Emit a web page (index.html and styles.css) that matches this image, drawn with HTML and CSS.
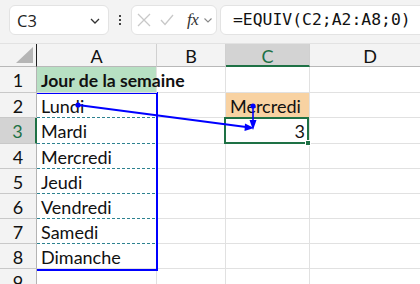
FILE: index.html
```html
<!DOCTYPE html>
<html>
<head>
<meta charset="utf-8">
<link rel="stylesheet" href="styles.css">
</head>
<body>
<div class="toolbar">
  <div class="namebox"><span class="ref">C3</span>
    <svg class="chev" width="10" height="6" viewBox="0 0 10 6"><path d="M1 1 L5 5 L9 1" fill="none" stroke="#333" stroke-width="1.3"/></svg>
  </div>
  <div class="vdots"><i></i><i></i><i></i></div>
  <div class="fxbox">
    <svg width="14" height="14" viewBox="0 0 14 14"><path d="M1 1 L13 13 M13 1 L1 13" stroke="#c8c8c8" stroke-width="1.3"/></svg>
    <svg width="14" height="12" viewBox="0 0 14 12"><path d="M1 6 L5 10.5 L13 1" fill="none" stroke="#c8c8c8" stroke-width="1.3"/></svg>
    <span class="fx">fx</span>
    <svg width="8" height="5" viewBox="0 0 8 5"><path d="M0.5 0.5 L4 4 L7.5 0.5" fill="none" stroke="#888" stroke-width="1.1"/></svg>
  </div>
  <div class="formula">=EQUIV(C2;A2:A8;0)</div>
</div>
<div class="sheet">
  <div class="grid">
    <div class="corner"><span class="tri"></span></div>
    <div class="ch">A</div>
    <div class="ch">B</div>
    <div class="ch sel">C</div>
    <div class="ch last">D</div>

    <div class="rh">1</div>
    <div class="c a1">Jour de la semaine</div>
    <div class="c"></div>
    <div class="c"></div>
    <div class="c last"></div>

    <div class="rh">2</div>
    <div class="c dl">Lundi</div>
    <div class="c"></div>
    <div class="c c2">Mercredi</div>
    <div class="c last"></div>

    <div class="rh sel">3</div>
    <div class="c dl">Mardi</div>
    <div class="c"></div>
    <div class="c num">3</div>
    <div class="c last"></div>

    <div class="rh">4</div>
    <div class="c dl">Mercredi</div>
    <div class="c"></div>
    <div class="c"></div>
    <div class="c last"></div>

    <div class="rh">5</div>
    <div class="c dl">Jeudi</div>
    <div class="c"></div>
    <div class="c"></div>
    <div class="c last"></div>

    <div class="rh">6</div>
    <div class="c dl">Vendredi</div>
    <div class="c"></div>
    <div class="c"></div>
    <div class="c last"></div>

    <div class="rh">7</div>
    <div class="c dl">Samedi</div>
    <div class="c"></div>
    <div class="c"></div>
    <div class="c last"></div>

    <div class="rh">8</div>
    <div class="c">Dimanche</div>
    <div class="c"></div>
    <div class="c"></div>
    <div class="c last"></div>

    <div class="rh">9</div>
    <div class="c"></div>
    <div class="c"></div>
    <div class="c"></div>
    <div class="c last"></div>
  </div>
  <div class="range"></div>
  <div class="active"><span class="handle"></span></div>
  <svg class="arrows" width="420" height="241" viewBox="0 0 420 241">
    <g fill="#0000ff" stroke="#0000ff">
      <circle cx="78" cy="61" r="2.6" stroke="none"/>
      <line x1="78" y1="61" x2="246" y2="83" stroke-width="2"/>
      <path d="M254 84 L245 79.5 L244.5 87 Z" stroke="none"/>
      <circle cx="253" cy="62" r="2.6" stroke="none"/>
      <line x1="253" y1="62" x2="253" y2="77" stroke-width="1.6"/>
      <path d="M253 86 L249.5 76 L256.5 76 Z" stroke="none"/>
    </g>
  </svg>
</div>
</body>
</html>
```
FILE: styles.css
```css
* { box-sizing: border-box; }
html, body { margin: 0; padding: 0; }
body {
  width: 420px;
  height: 284px;
  overflow: hidden;
  background: #ffffff;
  font-family: "Lato", "Liberation Sans", sans-serif;
}
.toolbar {
  height: 43px;
  background: #f3f3f3;
  display: flex;
  align-items: flex-start;
  padding: 5px 0 0 9px;
}
.namebox {
  width: 100px;
  height: 30px;
  background: #fff;
  border: 1px solid #e3e3e3;
  border-radius: 6px;
  display: flex;
  align-items: center;
  justify-content: space-between;
  padding: 0 8px 0 7px;
}
.ref {
  font-family: "Open Sans", "Liberation Sans", sans-serif;
  font-size: 16.5px;
  color: #222;
}
.chev { margin-top: 2px; }
.vdots {
  width: 22px;
  height: 30px;
  display: flex;
  flex-direction: column;
  align-items: center;
  justify-content: center;
  gap: 2px;
}
.vdots i {
  display: block;
  width: 2px;
  height: 2px;
  background: #444;
}
.fxbox {
  width: 86px;
  height: 30px;
  background: #fff;
  border: 1px solid #e3e3e3;
  border-radius: 6px;
  display: flex;
  align-items: center;
  padding: 0 0 0 5px;
  gap: 9px;
}
.fx {
  font-family: "Liberation Serif", "DejaVu Serif", serif;
  font-style: italic;
  font-size: 17px;
  color: #333;
  margin-left: 4px;
  margin-right: -3px;
  letter-spacing: -0.5px;
}
.formula {
  margin-left: 3px;
  flex: 1;
  margin-right: -6px;
  height: 30px;
  background: #fff;
  border: 1px solid #e3e3e3;
  border-radius: 6px;
  padding: 3px 0 0 12px;
  font-family: "DejaVu Sans Mono", "Liberation Mono", monospace;
  font-size: 16.4px;
  color: #111;
  line-height: 22px;
}
.sheet {
  position: relative;
  height: 241px;
  border-top: 1px solid #e2e2e2;
}
.grid {
  display: grid;
  grid-template-columns: 37px 120px 69px 84px 120px;
  grid-template-rows: 23px 26px 25px 26px 25px 25px 25px 25px 25px 25px;
}
.corner {
  position: relative;
  background: #f3f3f3;
  border-right: 1px solid #1f1f1f;
  border-bottom: 1px solid #b8b8b8;
}
.tri {
  position: absolute;
  right: 3px;
  bottom: 3px;
  width: 0;
  height: 0;
  border-left: 17px solid transparent;
  border-bottom: 16px solid #b5b5b5;
}
.ch {
  background: #f3f3f3;
  border-right: 1px solid #d0d0d0;
  border-bottom: 1px solid #b8b8b8;
  display: flex;
  align-items: center;
  justify-content: center;
  font-size: 18px;
  color: #111;
  padding-top: 1px;
}
.ch.sel {
  background: #d3d3d3;
  border-bottom: 2px solid #1e7145;
  color: #1e7145;
  padding-top: 2px;
}
.ch.last { border-right: none; }
.rh {
  background: #f3f3f3;
  border-right: 1px solid #b4b4b4;
  border-bottom: 1px solid #c8c8c8;
  display: flex;
  align-items: center;
  justify-content: center;
  font-size: 18px;
  color: #111;
  padding-top: 1px;
}
.rh.sel {
  background: #d3d3d3;
  border-right: 2px solid #1e7145;
  color: #1e7145;
}
.c {
  border-right: 1px solid #e1e1e1;
  border-bottom: 1px solid #e1e1e1;
  display: flex;
  align-items: center;
  padding: 1px 4px 0 4px;
  font-size: 18px;
  color: #111;
  white-space: nowrap;
}
.c.last { border-right: none; }
.a1 {
  background: #b7e0c3;
  font-weight: bold;
  font-size: 17.6px;
  position: relative;
  z-index: 1;
}
.c2 { background: #f8d2a2; }
.num { justify-content: flex-end; }
.dl {
  border-bottom: 1px solid transparent;
  background-image: repeating-linear-gradient(90deg, #2d8290 0 3px, transparent 3px 5px);
  background-size: 100% 1px;
  background-position: 0 100%;
  background-repeat: no-repeat;
  background-origin: border-box;
}
.range {
  position: absolute;
  left: 37px;
  top: 48px;
  width: 121px;
  height: 179px;
  border: 2px solid #0000ff;
  border-left: none;
}
.active {
  position: absolute;
  left: 224px;
  top: 73px;
  width: 85px;
  height: 27px;
  border: 2px solid #1e7145;
}
.handle {
  position: absolute;
  right: -4px;
  bottom: -4px;
  width: 6px;
  height: 6px;
  background: #1e7145;
  border: 1px solid #fff;
}
.arrows {
  position: absolute;
  left: 0;
  top: 0;
}
```
